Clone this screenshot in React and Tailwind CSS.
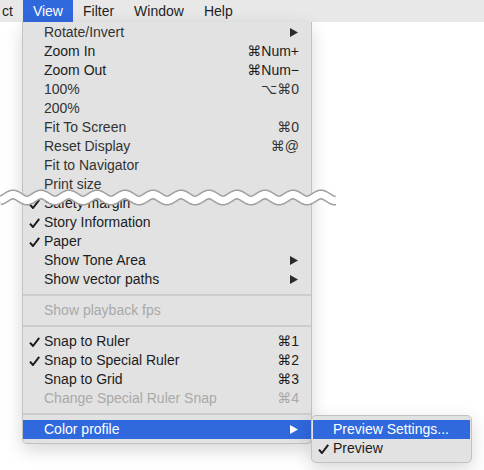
import React from "react";

const FONT = { fontFamily: '"Liberation Sans", "DejaVu Sans", Arial, sans-serif' };

const items = [
  { label: "Rotate/Invert", sub: true, tone: "soft" },
  { label: "Zoom In", key: "⌘Num+" },
  { label: "Zoom Out", key: "⌘Num−" },
  { label: "100%", key: "⌥⌘0", tone: "soft" },
  { label: "200%", tone: "soft" },
  { label: "Fit To Screen", key: "⌘0", tone: "soft" },
  { label: "Reset Display", key: "⌘@", tone: "soft" },
  { label: "Fit to Navigator", tone: "soft" },
  { label: "Print size", tone: "soft" },
  { label: "Safety margin", check: true },
  { label: "Story Information", check: true },
  { label: "Paper", check: true },
  { label: "Show Tone Area", sub: true },
  { label: "Show vector paths", sub: true },
  { sep: true },
  { label: "Show playback fps", disabled: true },
  { sep: true },
  { label: "Snap to Ruler", key: "⌘1", check: true },
  { label: "Snap to Special Ruler", key: "⌘2", check: true },
  { label: "Snap to Grid", key: "⌘3" },
  { label: "Change Special Ruler Snap", key: "⌘4", disabled: true },
  { sep: true },
  { label: "Color profile", sub: true, active: true },
];

function Arrow({ white }) {
  return (
    <svg width="8" height="9" viewBox="0 0 8 9" className="shrink-0">
      <polygon points="0,0 8,4.5 0,9" fill={white ? "#ffffff" : "#2a2a2a"} />
    </svg>
  );
}

function Check({ className }) {
  return (
    <svg className={className} width="11" height="10" viewBox="0 0 11 10">
      <path d="M1 5.6 L4 9 L10.2 0.8" fill="none" stroke="#1c1c1c" strokeWidth="2" strokeLinejoin="round" />
    </svg>
  );
}

function Row({ item }) {
  if (item.sep) {
    return (
      <div className="h-[12px] flex items-center">
        <div className="h-[2px] w-full bg-[#cdcdcd]" />
      </div>
    );
  }
  const color = item.active
    ? "text-white"
    : item.disabled
    ? "text-[#a9a9a9]"
    : item.tone === "soft"
    ? "text-[#333333]"
    : "text-[#1c1c1c]";
  return (
    <div
      className={`relative h-[19px] leading-[19px] flex items-center pl-[21px] pr-[12px] text-[14px] ${color} ${
        item.active ? "bg-[#3068dd]" : ""
      }`}
    >
      {item.check && <Check className="absolute left-[6px] top-[5px]" />}
      <span className="flex-1 whitespace-nowrap">{item.label}</span>
      {item.key && <span className="whitespace-nowrap">{item.key}</span>}
      {item.sub && (
        <span className="mr-[1px]">
          <Arrow white={item.active} />
        </span>
      )}
    </div>
  );
}

function Wave() {
  const pts = [];
  for (let x = 0; x <= 336; x += 1) {
    const y = 11.5 - 3 * Math.cos((2 * Math.PI * (x - 13)) / 28);
    pts.push(`${x},${y.toFixed(2)}`);
  }
  const d = "M" + pts.join(" L");
  return (
    <svg className="absolute left-0 top-[186px]" width="336" height="24" viewBox="0 0 336 24">
      <path d={d} fill="none" stroke="#a0a0a0" strokeWidth="10" />
      <path d={d} fill="none" stroke="#ffffff" strokeWidth="7" />
    </svg>
  );
}

export default function App() {
  return (
    <div className="relative w-[484px] h-[470px] bg-white overflow-hidden" style={FONT}>
      {/* menu bar */}
      <div className="flex h-[22px] bg-[#e8e8e8] text-[14px] leading-[22px] text-[#1f1f1f]">
        <div className="pl-[2px] pr-[10px]">ct</div>
        <div className="px-[10px] bg-[#3068dd] text-white">View</div>
        <div className="px-[10px]">Filter</div>
        <div className="px-[10px]">Window</div>
        <div className="px-[10px]">Help</div>
      </div>

      {/* View menu */}
      <div className="absolute left-[22px] top-[22px] w-[290px] bg-[#e2e2e2] border border-t-0 border-[#c2c2c2] rounded-b-[5px] pt-[1px] pb-[4px] shadow-[0_6px_18px_rgba(0,0,0,0.16)]">
        {items.map((it, i) => (
          <Row key={i} item={it} />
        ))}
      </div>

      {/* submenu */}
      <div className="absolute left-[311px] top-[415px] w-[161px] bg-[#e2e2e2] border border-[#c2c2c2] rounded-[5px] pt-[4px] pb-[4px] px-[1px] shadow-[0_6px_18px_rgba(0,0,0,0.16)]">
        <div className="h-[19px] leading-[19px] pl-[20px] text-[14px] text-white bg-[#3068dd] whitespace-nowrap">
          Preview Settings...
        </div>
        <div className="relative h-[19px] leading-[19px] pl-[20px] text-[14px] text-[#1c1c1c]">
          <Check className="absolute left-[5px] top-[5px]" />
          Preview
        </div>
      </div>

      <Wave />
    </div>
  );
}
